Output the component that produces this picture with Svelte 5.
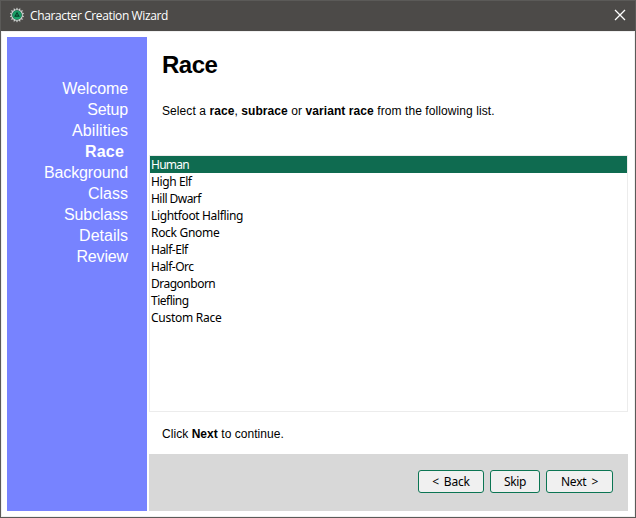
<script>
  // Label and its tracking in pixels
  const steps = [['Welcome', -.1], ['Setup', -.2], ['Abilities', .1], ['Race', .2], ['Background', -.15], ['Class', 0], ['Subclass', -.12], ['Details', 0], ['Review', -.15]];
  const races = [['Human', -.75], ['High Elf', -.4], ['Hill Dwarf', -.55], ['Lightfoot Halfling', -.36], ['Rock Gnome', -.3], ['Half-Elf', -.5], ['Half-Orc', -.5], ['Dragonborn', -.5], ['Tiefling', -.5], ['Custom Race', -.27]];
  let selected = $state('Human');
  const teeth = Array.from({ length: 14 }, (_, i) => (i * 360) / 14);
</script>

<div class="window">
  <header>
    <svg class="logo" width="16" height="16" viewBox="0 0 16 16">
      {#each teeth as angle}
        <path d="M7.3 2.6L8 .8L8.7 2.6Z" fill="#d8dcd9" stroke="#d8dcd9" stroke-width=".4" transform="rotate({angle} 8 8)" />
      {/each}
      <circle cx="8" cy="8" r="5.3" fill="#12382b" stroke="#cbd0cd" stroke-width="1.1" />
      <circle cx="8" cy="8" r="4.6" fill="#199b64" />
      <path d="M8 4.8L10.8 9.8H5.2Z" fill="#063c28" />
      <path d="M5.4 11H10.6M8 7.2V8.8" stroke="#20ad70" stroke-width=".9" />
    </svg>
    <h1>Character Creation Wizard</h1>
    <button class="close" aria-label="Close">
      <svg width="12" height="12" viewBox="0 0 12 12"><path d="M1 1L11 11M11 1L1 11" stroke="#fff" stroke-width="1.3" /></svg>
    </button>
  </header>
  <div class="body">
    <nav>
      {#each steps as [step, tracking]}
        <div class:current={step === 'Race'} style="letter-spacing: {tracking}px">{step}</div>
      {/each}
    </nav>
    <main>
      <section class="intro">
        <h2>Race</h2>
        <p>Select a <b>race</b>, <b>subrace</b> or <b>variant race</b> from the following list.</p>
      </section>
      <div class="list">
        {#each races as [race, tracking]}
          <button class="item" class:selected={race === selected} style="letter-spacing: {tracking}px" onclick={() => (selected = race)}>{race}</button>
        {/each}
      </div>
      <p class="hint">Click <b>Next</b> to continue.</p>
      <footer>
        <button class="action back">&lt; Back</button>
        <button class="action skip">Skip</button>
        <button class="action next">Next &gt;</button>
      </footer>
    </main>
  </div>
</div>

<style>
  * { box-sizing: border-box; }
  .window {
    width: 636px; height: 518px; display: flex; flex-direction: column;
    border: 1px solid #5b5a58; background: #fff; font-family: 'Liberation Sans', Arial, sans-serif;
  }
  header { height: 30px; flex: none; display: flex; align-items: center; background: #4c4a48; padding: 0 9px 0 8px; }
  .logo { margin-top: -2px; }
  h1 { margin: 0 0 0 5px; font: 12px/16px 'Open Sans', 'Noto Sans', sans-serif; color: #fff; letter-spacing: -.38px; }
  button { border: 0; padding: 0; background: none; color: #000; }
  .close { margin-left: auto; width: 12px; height: 12px; margin-top: -2px; }
  .close svg { display: block; }
  .body { flex: 1; min-height: 0; display: flex; gap: 2px; padding: 5px 6px 5px 5px; border: 1px solid #f0f0f0; }
  nav { width: 140px; background: #7783ff; padding: 41px 19px 0 0; color: #fff; text-align: right; font-size: 16px; line-height: 21px; }
  .current { font-weight: bold; padding-right: 4px; }
  main { width: 479px; display: flex; flex-direction: column; }
  .intro { height: 118px; padding: 14px 13px 0; }
  h2 { margin: 0; font-size: 24px; line-height: 28px; letter-spacing: -.5px; }
  p { margin: 0; font-size: 12px; line-height: 16px; letter-spacing: .08px; }
  .intro p { margin-top: 24px; }
  .list { height: 257px; border: 1px solid #ececec; display: flex; flex-direction: column; }
  .item { height: 17px; flex: none; padding-left: 1px; text-align: left; font: 12px/17px 'Noto Sans', 'Open Sans', sans-serif; }
  .selected { background: #0f6b50; color: #fff; }
  .hint { height: 42px; padding: 14px 13px 0; letter-spacing: .05px; }
  footer { height: 57px; background: #d8d8d8; display: flex; justify-content: flex-end; gap: 6px; padding: 16px 15px 0 0; }
  .action { height: 23px; border: 1px solid #0b7553; border-radius: 3px; background: #f0f0f0; font: 12px/21px 'Noto Sans', 'Open Sans', sans-serif; }
  .back { width: 66px; letter-spacing: -.2px; word-spacing: 2px; }
  .skip { width: 50px; letter-spacing: -.35px; }
  .next { width: 67px; letter-spacing: -.2px; word-spacing: 2px; }
</style>
